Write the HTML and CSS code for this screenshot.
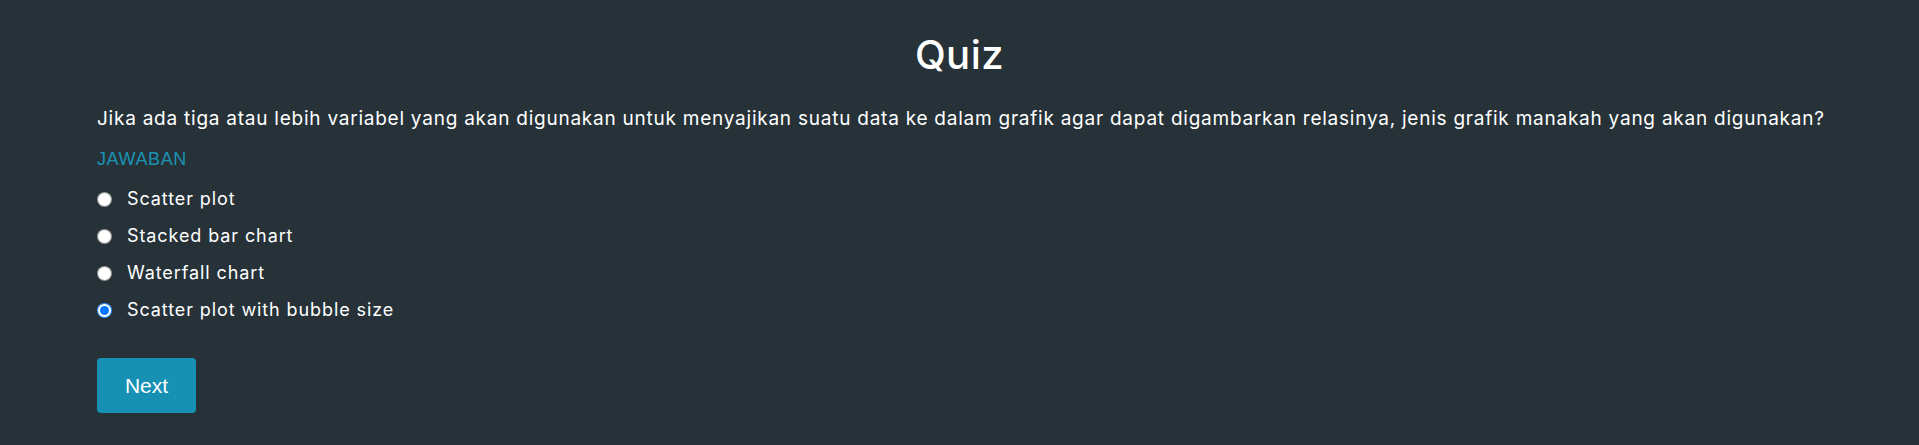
FILE: index.html
```html
<!DOCTYPE html>
<html lang="id">
<head>
<meta charset="utf-8">
<title>Quiz</title>
<link rel="stylesheet" href="styles.css">
</head>
<body>
<main class="quiz">
  <h1 class="quiz-title">Quiz</h1>
  <p class="question">Jika ada tiga atau lebih variabel yang akan digunakan untuk menyajikan suatu data ke dalam grafik agar dapat digambarkan relasinya, jenis grafik manakah yang akan digunakan?</p>
  <div class="answer-label">JAWABAN</div>
  <form class="options">
    <label class="option"><input type="radio" name="ans"><span>Scatter plot</span></label>
    <label class="option"><input type="radio" name="ans"><span>Stacked bar chart</span></label>
    <label class="option"><input type="radio" name="ans"><span>Waterfall chart</span></label>
    <label class="option"><input type="radio" name="ans" checked><span>Scatter plot with bubble size</span></label>
  </form>
  <button class="next-btn" type="button">Next</button>
</main>
</body>
</html>
```

FILE: styles.css
```css
html, body {
  margin: 0;
  padding: 0;
  background: #263238;
  height: 100%;
}
body {
  font-family: "Inter", "Open Sans", sans-serif;
  color: #ffffff;
}
.quiz {
  padding: 0 97px;
  display: flex;
  flex-direction: column;
  align-items: flex-start;
}
.quiz-title {
  align-self: center;
  margin: 33px 0 0;
  font-size: 40px;
  font-weight: 500;
  line-height: 44px;
  letter-spacing: 0.5px;
}
.question {
  margin: 30px 0 0;
  font-size: 19px;
  line-height: 24px;
  letter-spacing: 0.76px;
  white-space: nowrap;
}
.answer-label {
  margin-top: 16px;
  font-family: "Liberation Sans", Arial, sans-serif;
  font-size: 18px;
  line-height: 24px;
  letter-spacing: 0.6px;
  color: #1b93b4;
}
.options {
  margin-top: 16px;
  display: flex;
  flex-direction: column;
  gap: 13px;
}
.option {
  display: flex;
  align-items: center;
  gap: 15px;
  font-size: 18px;
  line-height: 24px;
  letter-spacing: 0.9px;
}
.option input {
  margin: 0;
  width: 15px;
  height: 15px;
}
.next-btn {
  margin-top: 36px;
  width: 99px;
  height: 55px;
  border: none;
  border-radius: 4px;
  background: #1791b3;
  color: #fff;
  font-family: "Liberation Sans", Arial, sans-serif;
  font-size: 21px;
}
```
